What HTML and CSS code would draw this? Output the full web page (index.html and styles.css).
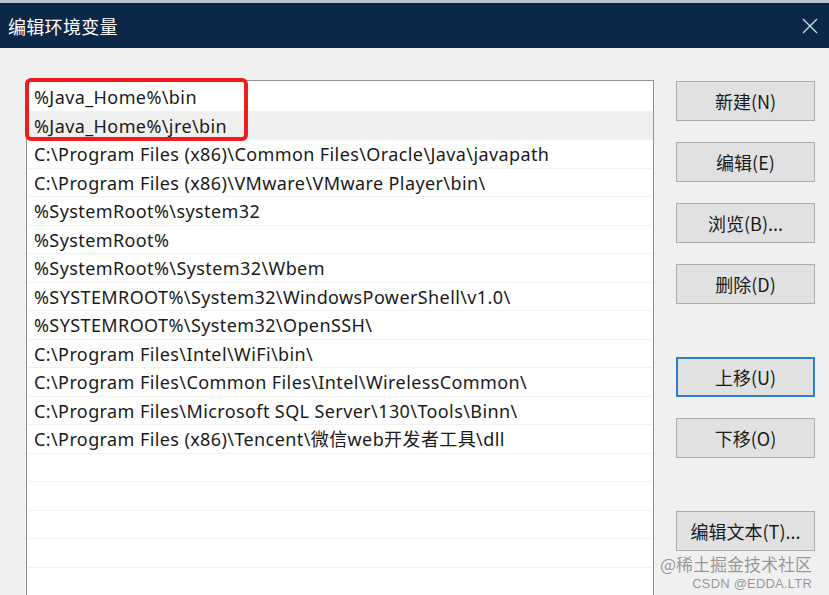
FILE: index.html
```html
<!DOCTYPE html>
<html lang="zh">
<head>
<meta charset="utf-8">
<title>编辑环境变量</title>
<link rel="stylesheet" href="styles.css">
</head>
<body>
<div class="dialog">
  <div class="titlebar">
    <span class="title">编辑环境变量</span>
    <svg class="close" width="16" height="16" viewBox="0 0 16 16"><path d="M1 1 L15 15 M15 1 L1 15" stroke="#d8dee6" stroke-width="1.3" fill="none"/></svg>
  </div>
  <div class="content">
    <div class="listbox">
      <div class="row">%Java_Home%\bin</div>
      <div class="row sel">%Java_Home%\jre\bin</div>
      <div class="row">C:\Program Files (x86)\Common Files\Oracle\Java\javapath</div>
      <div class="row">C:\Program Files (x86)\VMware\VMware Player\bin\</div>
      <div class="row">%SystemRoot%\system32</div>
      <div class="row">%SystemRoot%</div>
      <div class="row">%SystemRoot%\System32\Wbem</div>
      <div class="row">%SYSTEMROOT%\System32\WindowsPowerShell\v1.0\</div>
      <div class="row">%SYSTEMROOT%\System32\OpenSSH\</div>
      <div class="row">C:\Program Files\Intel\WiFi\bin\</div>
      <div class="row">C:\Program Files\Common Files\Intel\WirelessCommon\</div>
      <div class="row">C:\Program Files\Microsoft SQL Server\130\Tools\Binn\</div>
      <div class="row">C:\Program Files (x86)\Tencent\微信web开发者工具\dll</div>
      <div class="row"></div>
      <div class="row"></div>
      <div class="row"></div>
      <div class="row"></div>
      <div class="row"></div>
      <div class="highlight"></div>
    </div>
    <div class="buttons">
      <div class="btn">新建(N)</div>
      <div class="btn">编辑(E)</div>
      <div class="btn">浏览(B)...</div>
      <div class="btn">删除(D)</div>
      <div class="btn focus gap">上移(U)</div>
      <div class="btn">下移(O)</div>
      <div class="btn gap">编辑文本(T)...</div>
    </div>
  </div>
  <div class="watermark">
    <div class="wm1">@稀土掘金技术社区</div>
    <div class="wm2">CSDN @EDDA.LTR</div>
  </div>
</div>
</body>
</html>
```
FILE: styles.css
```css
html, body {
  margin: 0;
  padding: 0;
}
body {
  width: 829px;
  height: 595px;
  overflow: hidden;
  background: #f0f0f0;
  font-family: "Noto Sans", "Noto Sans CJK SC", sans-serif;
}
.dialog {
  position: relative;
  width: 829px;
  height: 595px;
}
.titlebar {
  height: 45px;
  border-top: 3px solid #b9c3cf;
  background: #0b2849;
  display: flex;
  align-items: center;
  justify-content: space-between;
  padding: 0 10px 0 8px;
}
.title {
  color: #ffffff;
  font-family: "Noto Sans CJK SC", sans-serif;
  font-size: 18px;
  letter-spacing: 0.3px;
}
.close {
  margin-right: 1px;
}
.content {
  display: flex;
  padding: 32px 0 0 26px;
}
.listbox {
  position: relative;
  width: 626px;
  height: 520px;
  background: #ffffff;
  border: 1px solid #8e9196;
  padding-top: 2px;
}
.row {
  height: 28.5px;
  box-sizing: border-box;
  border-bottom: 1px solid #f2f2f2;
  padding-left: 7px;
  font-size: 18px;
  letter-spacing: 0.4px;
  line-height: 28px;
  color: #1a1a1a;
  white-space: nowrap;
}
.row.sel {
  background: #efefef;
}
.highlight {
  position: absolute;
  left: -2px;
  top: -3px;
  width: 215px;
  height: 55px;
  border: 4px solid #ee1c1c;
  border-radius: 6px;
}
.buttons {
  display: flex;
  flex-direction: column;
  gap: 21px;
  margin-left: 22px;
  padding-top: 1px;
}
.btn {
  width: 137px;
  height: 38px;
  background: #e1e1e1;
  border: 1px solid #adadad;
  display: flex;
  align-items: center;
  justify-content: center;
  font-family: "Noto Sans CJK SC", sans-serif;
  font-size: 18px;
  color: #1a1a1a;
}
.btn.focus {
  width: 135px;
  height: 36px;
  border: 2px solid #2a7fd1;
}
.btn.gap {
  margin-top: 32px;
}
.watermark {
  position: absolute;
  right: 17px;
  top: 555px;
  text-align: right;
  color: rgba(120, 120, 120, 0.75);
  font-family: "Noto Sans CJK SC", sans-serif;
}
.wm1 {
  font-size: 17px;
  line-height: 18px;
}
.wm2 {
  font-family: "Liberation Sans", sans-serif;
  font-size: 13px;
  line-height: 14px;
  margin-top: 4px;
  letter-spacing: 0.2px;
}
```
